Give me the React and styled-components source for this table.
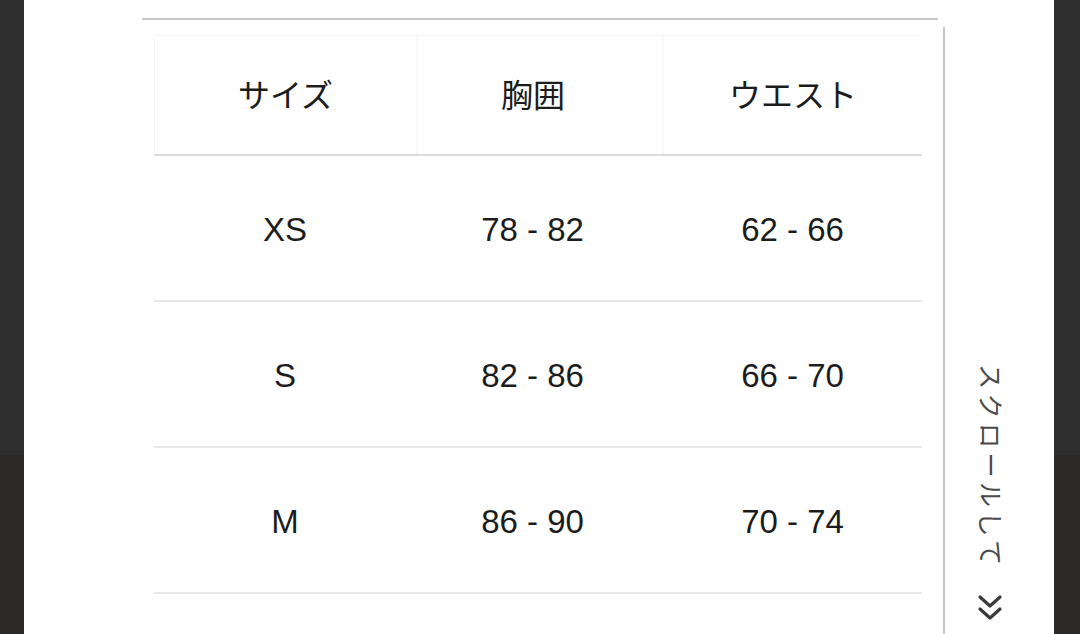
import styled, { createGlobalStyle } from "styled-components";

const GlobalStyle = createGlobalStyle`
  html, body {
    margin: 0;
    padding: 0;
    height: 634px;
    overflow: hidden;
    background: #ffffff;
  }
  #root {
    height: 100%;
  }
`;

const Screen = styled.div`
  display: flex;
  width: 1080px;
  height: 634px;
  overflow: hidden;
  font-family: "Liberation Sans", Arial, "Noto Sans CJK JP", sans-serif;
`;

const Edge = styled.div`
  width: ${(p) => p.$w}px;
  flex-shrink: 0;
  background: linear-gradient(#2f2f2f 0, #2f2f2f 455px, #2c2927 455px);
`;

const Sheet = styled.div`
  flex: 1;
  display: flex;
  background: #ffffff;
  padding: 18px 0 0 118px;
`;

const TableColumn = styled.div`
  width: 796px;
  flex-shrink: 0;
`;

const TopRule = styled.div`
  height: 2px;
  background: #c9c9c9;
`;

const SizeTable = styled.div`
  width: 768px;
  margin: 15px 0 0 12px;
`;

const Row = styled.div`
  display: grid;
  grid-template-columns: 262px 247px 259px;
  height: ${(p) => (p.$head ? 121 : 146)}px;
  border-bottom: 2px solid ${(p) => (p.$head ? "#dcdcdc" : "#e8e8e8")};
  box-sizing: border-box;
  ${(p) => p.$head && "border-top: 1px solid #f6f6f6;"}
`;

const Cell = styled.div`
  display: flex;
  align-items: center;
  justify-content: center;
  color: #1c1c1c;
  font-size: ${(p) => (p.$head ? 32 : 33)}px;
  font-family: ${(p) =>
    p.$head
      ? `"Noto Sans CJK JP", "Liberation Sans", sans-serif`
      : `"Liberation Sans", Arial, sans-serif`};
  ${(p) => p.$head && "border-left: 1px solid #f5f5f5;"}
  padding-right: ${(p) => (p.$mid ? 14 : 0)}px;
  padding-bottom: ${(p) => (p.$head ? 4 : 0)}px;
  padding-top: ${(p) => (p.$head ? 0 : 4)}px;
`;

const ScrollRail = styled.div`
  margin: 9px 0 0 5px;
  border-left: 2px solid #c9c9c9;
  padding: 337px 0 0 34px;
  display: flex;
  flex-direction: column;
  align-items: flex-start;
`;

const ScrollHint = styled.span`
  writing-mode: vertical-rl;
  text-orientation: sideways;
  font-family: "Noto Sans CJK JP", sans-serif;
  font-size: 25px;
  letter-spacing: 4.5px;
  color: #4a4a4a;
  line-height: 1;
`;

const Chevrons = styled.svg`
  margin-top: 24px;
  margin-left: -2px;
  display: block;
`;

const rows = [
  ["XS", "78 - 82", "62 - 66"],
  ["S", "82 - 86", "66 - 70"],
  ["M", "86 - 90", "70 - 74"],
];

const App = () => {
  return (
    <>
      <GlobalStyle />
      <Screen>
        <Edge $w={24} />
        <Sheet>
          <TableColumn>
            <TopRule />
            <SizeTable>
              <Row $head>
                <Cell $head>サイズ</Cell>
                <Cell $head $mid>胸囲</Cell>
                <Cell $head>ウエスト</Cell>
              </Row>
              {rows.map((r) => (
                <Row key={r[0]}>
                  {r.map((v, i) => (
                    <Cell key={i} $mid={i === 1}>
                      {v}
                    </Cell>
                  ))}
                </Row>
              ))}
            </SizeTable>
          </TableColumn>
          <ScrollRail>
            <ScrollHint>スクロールして</ScrollHint>
            <Chevrons width="26" height="30" viewBox="0 0 26 30">
              <path
                d="M3 3 L13 12 L23 3 M3 15 L13 24 L23 15"
                fill="none"
                stroke="#3a3a3a"
                strokeWidth="3.2"
                strokeLinecap="round"
                strokeLinejoin="round"
              />
            </Chevrons>
          </ScrollRail>
        </Sheet>
        <Edge $w={26} />
      </Screen>
    </>
  );
};

export default App;
